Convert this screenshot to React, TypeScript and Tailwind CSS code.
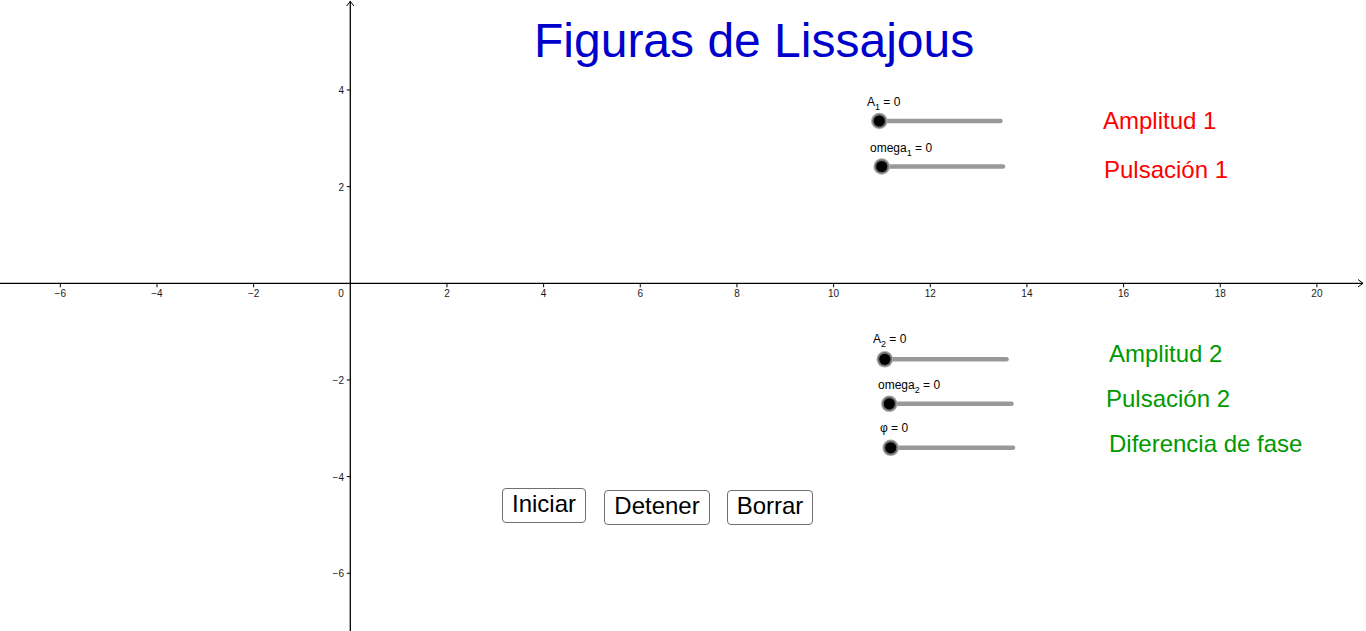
import React from "react";

const UNIT = 48.33;
const OX = 350.3;
const OY = 283.3;
const px = (v: number) => OX + v * UNIT;
const py = (v: number) => OY - v * UNIT;

const xTicks = [-6, -4, -2, 2, 4, 6, 8, 10, 12, 14, 16, 18, 20];
const yTicks = [4, 2, -2, -4, -6];
const fmt = (v: number) => (v < 0 ? "\u2212" + Math.abs(v) : String(v));

const sliders = [
  { cx: 879.3, cy: 121, end: 1000.5 },
  { cx: 881.7, cy: 166.5, end: 1003 },
  { cx: 884.8, cy: 359.3, end: 1006.5 },
  { cx: 889.3, cy: 403.8, end: 1011.5 },
  { cx: 890.7, cy: 447.8, end: 1013 },
];

function Sub({ children }: { children: React.ReactNode }) {
  return <span className="relative top-[4px] text-[9px]">{children}</span>;
}

const btn =
  "h-[35px] pt-[3px] border border-[#707070] rounded-[4px] bg-white text-[24px] leading-[24px] text-black flex items-start justify-center";

export default function App() {
  return (
    <div
      className="relative w-[1366px] h-[631px] bg-white overflow-hidden"
      style={{ fontFamily: '"Liberation Sans", Arial, sans-serif' }}
    >
      <svg
        className="absolute inset-0"
        width={1366}
        height={631}
        viewBox="0 0 1366 631"
        fontFamily='"Liberation Sans", Arial, sans-serif'
      >
        {/* axes */}
        <line x1={0} y1={OY} x2={1363} y2={OY} stroke="#000" strokeWidth={1.3} />
        <line x1={OX} y1={1} x2={OX} y2={631} stroke="#000" strokeWidth={1.3} />
        <polyline points="1358,279.5 1363,283.3 1358,287" fill="none" stroke="#000" strokeWidth={1} />
        <polyline points="346.6,6 350.3,1.5 354,6" fill="none" stroke="#000" strokeWidth={1} />
        {xTicks.map((v) => (
          <g key={"x" + v}>
            <line x1={px(v)} y1={OY} x2={px(v)} y2={OY + 4} stroke="#000" strokeWidth={1} />
            <text x={px(v)} y={297} fontSize={10} textAnchor="middle" fill="#1a1a1a">
              {fmt(v)}
            </text>
          </g>
        ))}
        <text x={343.8} y={297} fontSize={10} textAnchor="end" fill="#1a1a1a">
          0
        </text>
        {yTicks.map((v) => (
          <g key={"y" + v}>
            <line x1={OX - 3.5} y1={py(v)} x2={OX} y2={py(v)} stroke="#000" strokeWidth={1} />
            <text x={344} y={py(v) + 4} fontSize={10} textAnchor="end" fill="#1a1a1a">
              {fmt(v)}
            </text>
          </g>
        ))}
        {/* sliders */}
        {sliders.map((s, i) => (
          <g key={"s" + i}>
            <line
              x1={s.cx}
              y1={s.cy}
              x2={s.end}
              y2={s.cy}
              stroke="#999999"
              strokeWidth={4.5}
              strokeLinecap="round"
            />
            <circle cx={s.cx} cy={s.cy} r={8.3} fill="#adadad" />
            <circle cx={s.cx} cy={s.cy} r={7.2} fill="#707070" />
            <circle cx={s.cx} cy={s.cy} r={5.6} fill="#000" />
          </g>
        ))}
      </svg>

      {/* title */}
      <div className="absolute left-[534px] top-[17px] text-[48px] leading-none text-[#0000cc] whitespace-nowrap">
        Figuras de Lissajous
      </div>

      {/* slider labels */}
      <div className="absolute left-[867px] top-[96px] text-[12px] leading-none text-black whitespace-nowrap">
        A<Sub>1</Sub> = 0
      </div>
      <div className="absolute left-[870px] top-[142px] text-[12px] leading-none text-black whitespace-nowrap">
        omega<Sub>1</Sub> = 0
      </div>
      <div className="absolute left-[873px] top-[333px] text-[12px] leading-none text-black whitespace-nowrap">
        A<Sub>2</Sub> = 0
      </div>
      <div className="absolute left-[878px] top-[379px] text-[12px] leading-none text-black whitespace-nowrap">
        omega<Sub>2</Sub> = 0
      </div>
      <div className="absolute left-[880px] top-[422px] text-[12px] leading-none text-black whitespace-nowrap">
        φ = 0
      </div>

      {/* descriptive labels */}
      <div className="absolute left-[1103px] top-[109px] text-[24px] leading-none text-[#ff0000] whitespace-nowrap">
        Amplitud 1
      </div>
      <div className="absolute left-[1104px] top-[158px] text-[24px] leading-none text-[#ff0000] whitespace-nowrap">
        Pulsación 1
      </div>
      <div className="absolute left-[1109px] top-[342px] text-[24px] leading-none text-[#009900] whitespace-nowrap">
        Amplitud 2
      </div>
      <div className="absolute left-[1106px] top-[387px] text-[24px] leading-none text-[#009900] whitespace-nowrap">
        Pulsación 2
      </div>
      <div className="absolute left-[1109px] top-[432px] text-[24px] leading-none text-[#009900] whitespace-nowrap">
        Diferencia de fase
      </div>

      {/* buttons */}
      <div className="absolute left-[502px] top-[488px] flex items-start gap-[18px]">
        <button className={btn + " w-[84px]"}>Iniciar</button>
        <div className="flex items-start gap-[17px] mt-[2px]">
          <button className={btn + " w-[106px]"}>Detener</button>
          <button className={btn + " w-[86px]"}>Borrar</button>
        </div>
      </div>
    </div>
  );
}
